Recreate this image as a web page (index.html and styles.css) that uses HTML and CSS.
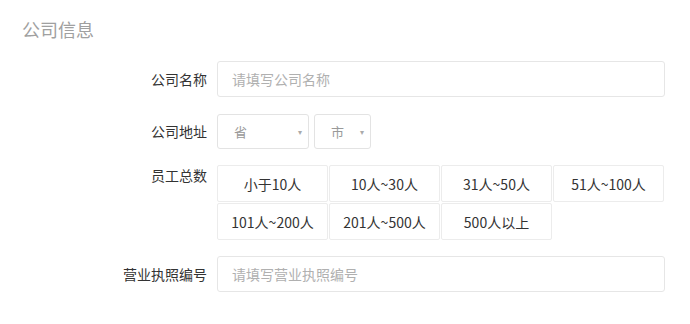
FILE: index.html
```html
<!DOCTYPE html>
<html lang="zh-CN">
<head>
  <meta charset="UTF-8">
  <meta name="viewport" content="width=device-width, initial-scale=1">
  <title>公司信息</title>
  <link rel="stylesheet" href="styles.css">
</head>
<body>

<div class="page">
  <h2 class="section-title">公司信息</h2>

  <!-- 公司名称 -->
  <div class="form-row first">
    <label class="form-label">公司名称</label>
    <div class="form-field">
      <input class="text-input" type="text" placeholder="请填写公司名称">
    </div>
  </div>

  <!-- 公司地址 -->
  <div class="form-row">
    <label class="form-label short">公司地址</label>
    <div class="form-field select-group">
      <div class="select-box province">
        <span>省</span>
        <span class="caret">&#9662;</span>
      </div>
      <div class="select-box city">
        <span>市</span>
        <span class="caret">&#9662;</span>
      </div>
    </div>
  </div>

  <!-- 员工总数 -->
  <div class="form-row">
    <label class="form-label top">员工总数</label>
    <div class="form-field size-grid">
      <div class="size-option">小于10人</div>
      <div class="size-option">10人~30人</div>
      <div class="size-option">31人~50人</div>
      <div class="size-option">51人~100人</div>
      <div class="size-option">101人~200人</div>
      <div class="size-option">201人~500人</div>
      <div class="size-option">500人以上</div>
    </div>
  </div>

  <!-- 营业执照编号 -->
  <div class="form-row">
    <label class="form-label">营业执照编号</label>
    <div class="form-field">
      <input class="text-input" type="text" placeholder="请填写营业执照编号">
    </div>
  </div>
</div>

</body>
</html>
```

FILE: styles.css
```css
body {
  margin: 0;
  background: #fff;
  font-family: "Noto Sans CJK SC", "Liberation Sans", sans-serif;
  color: #333;
}

.page {
  padding: 16px 22px;
}

.section-title {
  margin: 0 0 19px;
  font-size: 18px;
  font-weight: normal;
  line-height: 26px;
  color: #a0a0a0;
}

/* Form rows */
.form-row {
  display: flex;
  margin-bottom: 16px;
}

.form-row.first {
  margin-bottom: 17px;
}

.form-label {
  flex: 0 0 185px;
  margin-right: 10px;
  text-align: right;
  font-size: 14px;
  line-height: 36px;
  color: #333;
}

.form-label.short {
  line-height: 35px;
}

.form-label.top {
  line-height: 20px;
}

.form-field {
  width: 448px;
}

.text-input {
  box-sizing: border-box;
  width: 448px;
  height: 36px;
  padding: 0 14px;
  border: 1px solid #e6e6e6;
  border-radius: 3px;
  font-family: inherit;
  font-size: 14px;
  color: #333;
  outline: none;
}

.text-input::placeholder {
  color: #b0b0b0;
}

/* Address selects */
.select-group {
  display: flex;
  gap: 5px;
}

.select-box {
  box-sizing: border-box;
  height: 35px;
  display: flex;
  align-items: center;
  justify-content: space-between;
  padding: 0 6px 0 16px;
  border: 1px solid #e3e3e3;
  border-radius: 3px;
  font-size: 13px;
  color: #999;
}

.select-box.province {
  width: 92px;
}

.select-box.city {
  width: 57px;
}

.caret {
  font-size: 8px;
  color: #aaa;
}

/* Company size options */
.size-grid {
  display: grid;
  grid-template-columns: repeat(4, 111px);
  grid-auto-rows: 37px;
  gap: 1px;
}

.size-option {
  display: flex;
  align-items: center;
  justify-content: center;
  border: 1px solid #ececec;
  border-radius: 2px;
  font-size: 14px;
  color: #333;
  cursor: pointer;
}
```
